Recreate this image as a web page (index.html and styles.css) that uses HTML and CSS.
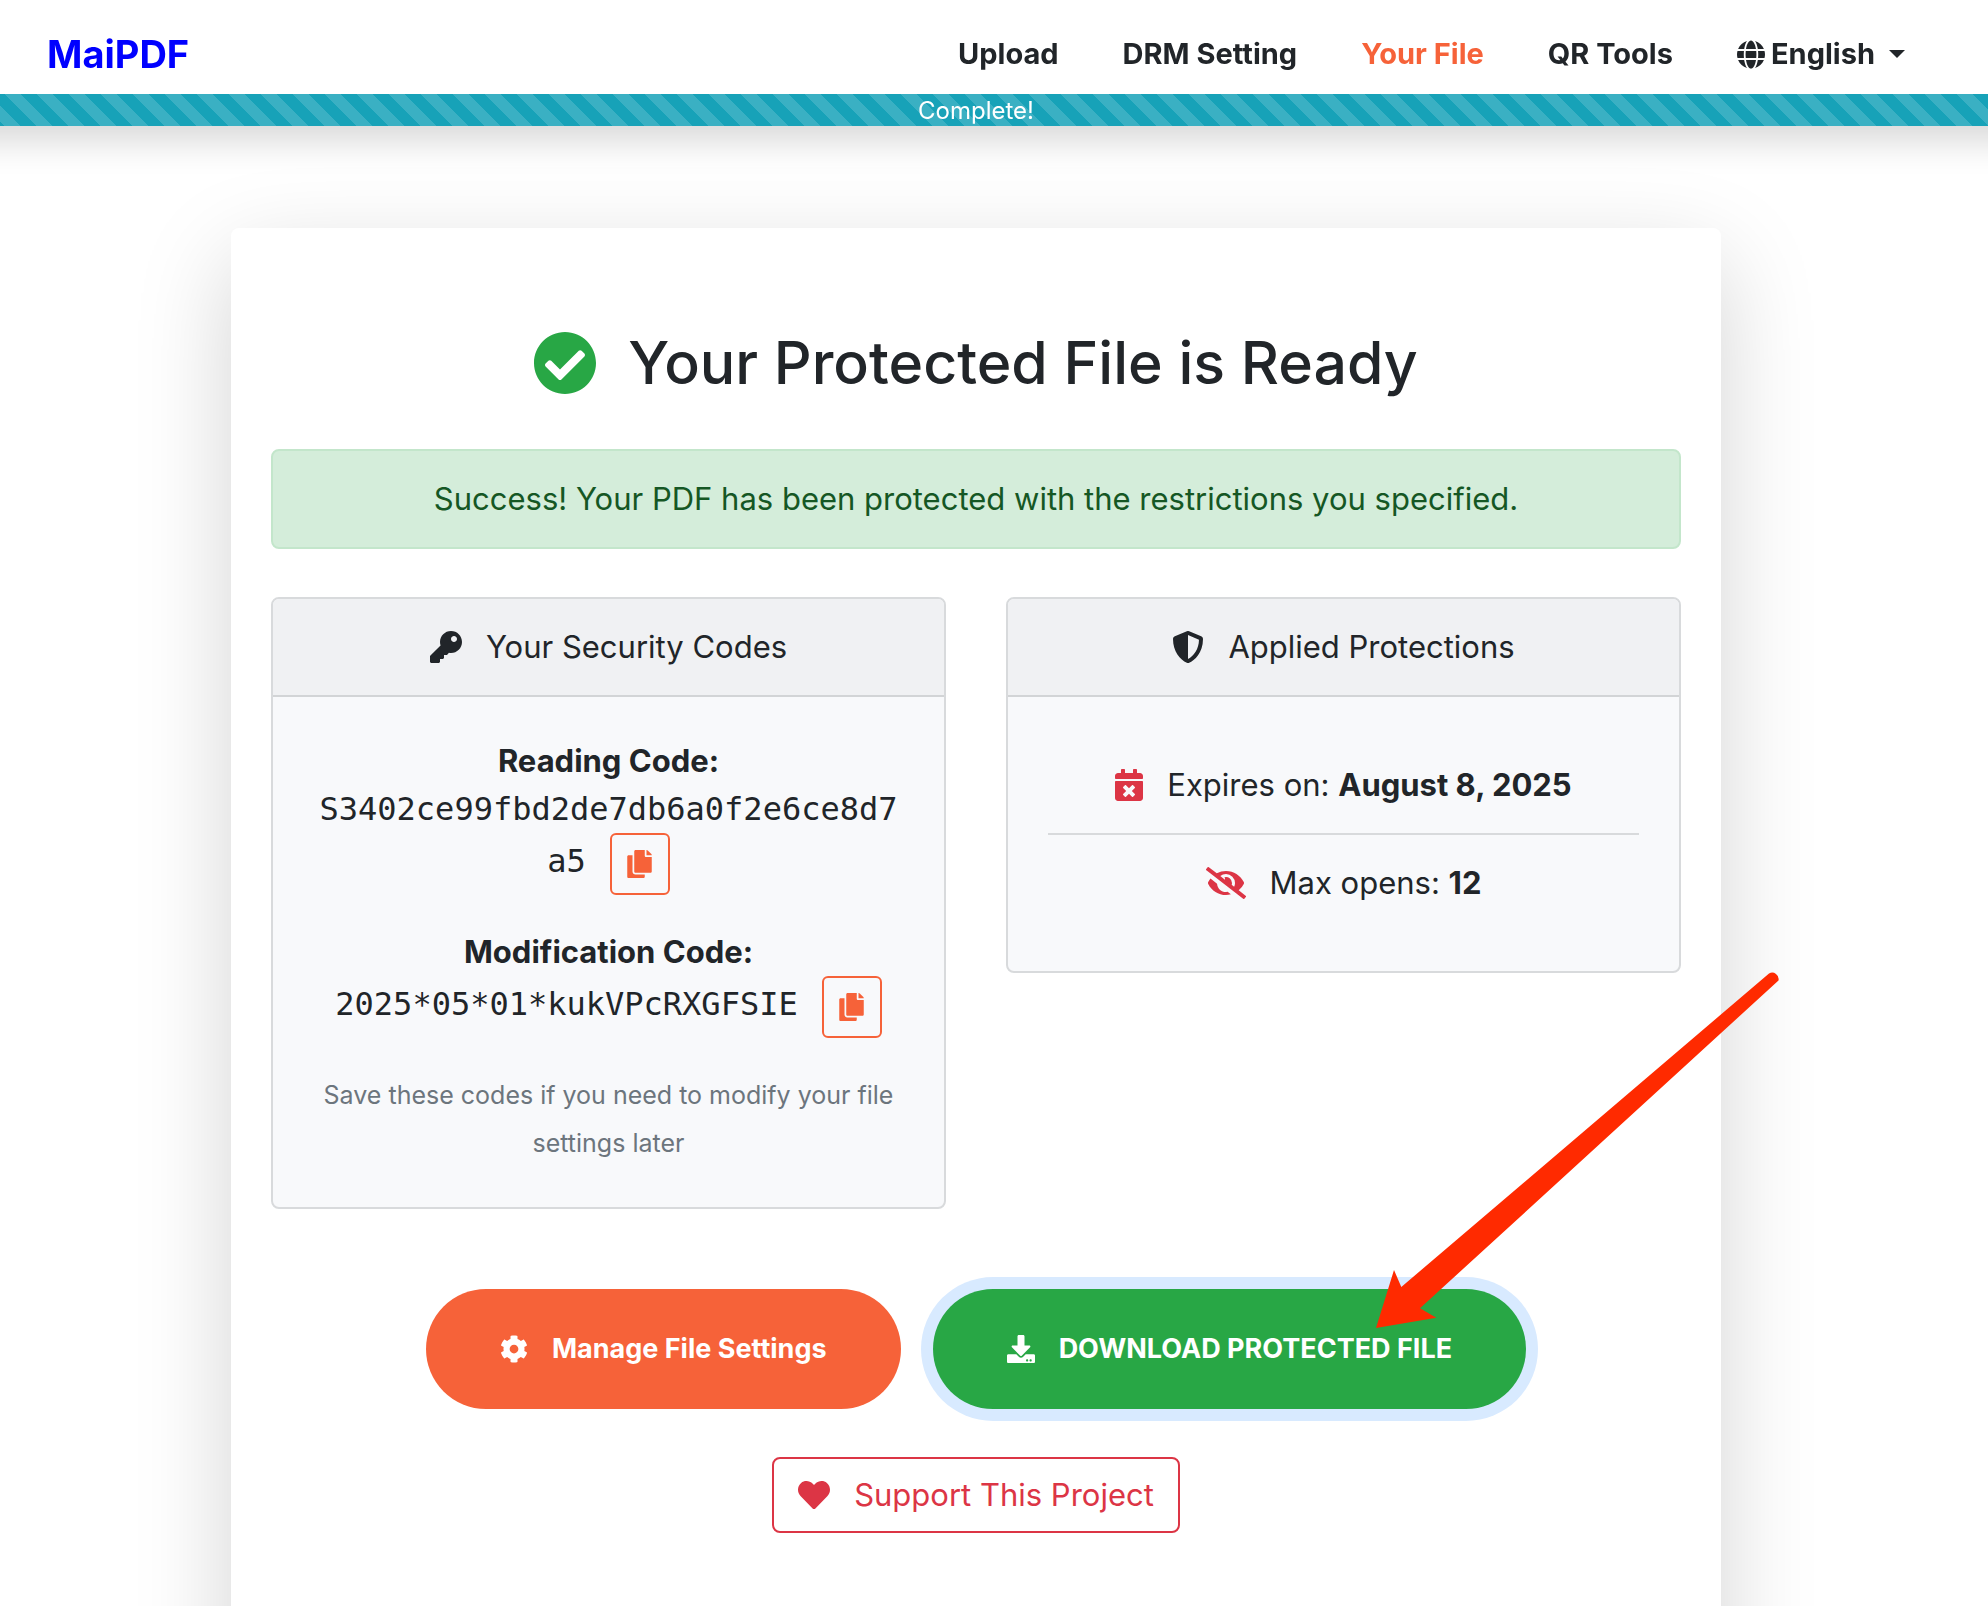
FILE: index.html
```html
<!DOCTYPE html>
<html lang="en">
<head>
<meta charset="utf-8">
<meta name="viewport" content="width=device-width, initial-scale=1">
<title>MaiPDF - Your File</title>
<link rel="stylesheet" href="styles.css">
</head>
<body>
<svg class="sprite" aria-hidden="true">
  <symbol id="copy" viewBox="0 0 448 512"><path d="M320 448v40c0 13.255-10.745 24-24 24H24c-13.255 0-24-10.745-24-24V120c0-13.255 10.745-24 24-24h72v296c0 30.879 25.121 56 56 56h168zm0-344V0H152c-13.255 0-24 10.745-24 24v368c0 13.255 10.745 24 24 24h272c13.255 0 24-10.745 24-24V128H344c-13.2 0-24-10.8-24-24zm120.971-31.029L375.029 7.029A24 24 0 0 0 358.059 0H352v96h96v-6.059a24 24 0 0 0-7.029-16.97z"/></symbol>
</svg>
<header class="topbar">
  <nav class="nav">
    <a class="brand" href="#">MaiPDF</a>
    <div class="nav-links">
      <a class="nav-link" href="#">Upload</a>
      <a class="nav-link" href="#">DRM Setting</a>
      <a class="nav-link active" href="#" aria-current="page">Your File</a>
      <a class="nav-link" href="#">QR Tools</a>
      <button class="nav-link lang" type="button">
        <svg class="globe" viewBox="0 0 496 512" aria-hidden="true"><path d="M336.5 160C322 70.7 287.8 8 248 8s-74 62.7-88.5 152h177zM152 256c0 22.2 1.2 43.5 3.3 64h185.3c2.1-20.5 3.3-41.8 3.3-64s-1.2-43.5-3.3-64H155.3c-2.1 20.5-3.3 41.8-3.3 64zm324.7-96c-28.6-67.9-86.5-120.4-158-141.6 24.4 33.8 41.2 84.7 50 141.6h108zM177.2 18.4C105.8 39.6 47.8 92.1 19.3 160h108c8.7-56.9 25.5-107.8 49.9-141.6zM487.4 192H372.7c2.1 21 3.3 42.5 3.3 64s-1.2 43-3.3 64h114.6c5.5-20.5 8.6-41.8 8.6-64s-3.1-43.5-8.5-64zM120 256c0-21.5 1.2-43 3.3-64H8.6C3.2 212.5 0 233.8 0 256s3.2 43.5 8.6 64h114.6c-2-21-3.2-42.5-3.2-64zm39.5 96c14.5 89.3 48.7 152 88.5 152s74-62.7 88.5-152h-177zm159.3 141.6c71.4-21.2 129.4-73.7 158-141.6h-108c-8.8 56.9-25.6 107.8-50 141.6zM19.3 352c28.6 67.9 86.5 120.4 158 141.6-24.4-33.8-41.2-84.7-50-141.6h-108z"/></svg>
        English
        <span class="caret"></span>
      </button>
    </div>
  </nav>
  <div class="progress" role="progressbar" aria-valuenow="100" aria-valuemin="0" aria-valuemax="100">Complete!</div>
</header>
<main class="page">
  <section class="sheet">
    <h1 class="title">
      <svg class="title-icon" viewBox="8 8 496 496" aria-hidden="true"><path d="M504 256c0 136.967-111.033 248-248 248S8 392.967 8 256 119.033 8 256 8s248 111.033 248 248zM227.314 387.314l184-184c6.248-6.248 6.248-16.379 0-22.627l-22.627-22.627c-6.248-6.249-16.379-6.249-22.628 0L216 308.118l-70.059-70.059c-6.248-6.248-16.379-6.248-22.628 0l-22.627 22.627c-6.248 6.248-6.248 16.379 0 22.627l104 104c6.249 6.249 16.379 6.249 22.628.001z"/></svg>
      Your Protected File is Ready
    </h1>
    <div class="alert" role="status">Success! Your PDF has been protected with the restrictions you specified.</div>

    <div class="columns">
      <article class="card">
        <h2 class="card-header">
          <svg class="icon" viewBox="0 0 512 512" aria-hidden="true"><path d="M512 176.001C512 273.203 433.202 352 336 352c-11.22 0-22.19-1.062-32.827-3.069l-24.012 27.014A23.999 23.999 0 0 1 261.223 384H224v40c0 13.255-10.745 24-24 24h-40v40c0 13.255-10.745 24-24 24H24c-13.255 0-24-10.745-24-24v-78.059c0-6.365 2.529-12.47 7.029-16.971l161.802-161.802C163.108 213.814 160 195.271 160 176 160 78.798 238.797.001 335.999 0 433.488-.001 512 78.511 512 176.001zM336 128c0 26.51 21.49 48 48 48s48-21.49 48-48-21.49-48-48-48-48 21.49-48 48z"/></svg>
          Your Security Codes
        </h2>
        <div class="card-body">
          <div class="code-block">
            <strong>Reading Code:</strong>
            <div class="code-line"><code>S3402ce99fbd2de7db6a0f2e6ce8d7a5</code><button class="copy" type="button" aria-label="Copy reading code"><svg class="copy-icon" aria-hidden="true"><use href="#copy"/></svg></button></div>
          </div>
          <div class="code-block">
            <strong>Modification Code:</strong>
            <div class="code-line"><code>2025*05*01*kukVPcRXGFSIE</code><button class="copy" type="button" aria-label="Copy modification code"><svg class="copy-icon" aria-hidden="true"><use href="#copy"/></svg></button></div>
          </div>
          <p class="note">Save these codes if you need to modify your file settings later</p>
        </div>
      </article>

      <article class="card">
        <h2 class="card-header">
          <svg class="icon" viewBox="0 0 512 512" aria-hidden="true"><path d="M466.5 83.7l-192-80a48.15 48.15 0 0 0-36.9 0l-192 80C27.7 91.1 16 108.6 16 128c0 198.5 114.5 335.7 221.5 380.3 11.8 4.9 25.1 4.9 36.9 0C360.1 472.6 496 349.3 496 128c0-19.4-11.7-36.9-29.5-44.3zM256.1 446.3l-.1-381 175.9 73.3c-3.3 151.4-82.1 261.1-175.8 307.7z"/></svg>
          Applied Protections
        </h2>
        <ul class="card-body rules">
          <li class="rule">
            <svg class="icon narrow danger" viewBox="0 0 448 512" aria-hidden="true"><path d="M436 160H12c-6.6 0-12-5.4-12-12v-36c0-26.500 21.500-48 48-48h48V12c0-6.600 5.400-12 12-12h40c6.600 0 12 5.400 12 12v52h128V12c0-6.600 5.400-12 12-12h40c6.600 0 12 5.400 12 12v52h48c26.500 0 48 21.500 48 48v36c0 6.600-5.400 12-12 12zM12 192h424c6.600 0 12 5.400 12 12v260c0 26.500-21.500 48-48 48H48c-26.500 0-48-21.500-48-48V204c0-6.600 5.400-12 12-12zm257.300 160l48.100-48.100c4.700-4.700 4.700-12.300 0-17l-28.300-28.300c-4.700-4.700-12.300-4.700-17 0L224 306.700l-48.100-48.100c-4.700-4.700-12.300-4.700-17 0l-28.300 28.300c-4.700 4.700-4.700 12.300 0 17l48.100 48.100-48.100 48.100c-4.700 4.700-4.700 12.300 0 17l28.300 28.300c4.700 4.700 12.300 4.700 17 0l48.100-48.100 48.100 48.100c4.700 4.700 12.300 4.700 17 0l28.300-28.300c4.700-4.700 4.700-12.300 0-17L269.300 352z"/></svg>
            <span>Expires on: <strong>August 8, 2025</strong></span>
          </li>
          <li class="rule">
            <svg class="icon wide danger" viewBox="0 0 640 512" aria-hidden="true"><path d="M320 400c-75.850 0-137.250-58.710-142.900-133.110L72.200 185.820c-13.790 17.300-26.480 35.590-36.720 55.590a32.350 32.350 0 0 0 0 29.190C89.710 376.410 197.070 448 320 448c26.910 0 52.870-4 77.890-10.460L346 397.390a144.130 144.130 0 0 1-26 2.610zm313.820 58.100l-110.550-85.440a331.250 331.250 0 0 0 81.250-102.070 32.350 32.350 0 0 0 0-29.190C550.290 135.590 442.930 64 320 64a308.150 308.150 0 0 0-147.320 37.700L45.460 3.370A16 16 0 0 0 23 6.180L3.370 31.450A16 16 0 0 0 6.180 53.900l588.360 454.730a16 16 0 0 0 22.460-2.810l19.640-25.270a16 16 0 0 0-2.820-22.450zm-183.720-142l-39.300-30.380A94.750 94.750 0 0 0 416 256a94.760 94.760 0 0 0-121.310-92.210A47.650 47.650 0 0 1 304 192a46.640 46.640 0 0 1-1.540 10l-73.610-56.890A142.310 142.310 0 0 1 320 112a143.920 143.920 0 0 1 144 144c0 21.630-5.290 41.790-13.900 60.110z"/></svg>
            <span>Max opens: <strong>12</strong></span>
          </li>
        </ul>
      </article>
    </div>

    <div class="actions">
      <button class="pill manage" type="button">
        <svg class="pill-icon" viewBox="0 0 512 512" aria-hidden="true"><path d="M487.4 315.7l-42.6-24.6c4.3-23.2 4.3-47 0-70.2l42.6-24.6c4.9-2.8 7.1-8.6 5.5-14-11.1-35.6-30-67.8-54.7-94.6-3.8-4.1-10-5.1-14.8-2.3L380.8 110c-17.9-15.4-38.5-27.3-60.8-35.1V25.8c0-5.6-3.9-10.5-9.4-11.7-36.7-8.2-74.3-7.8-109.2 0-5.5 1.2-9.4 6.1-9.4 11.7V75c-22.2 7.9-42.8 19.8-60.8 35.1L88.7 85.5c-4.9-2.8-11-1.9-14.8 2.3-24.7 26.7-43.6 58.9-54.7 94.6-1.7 5.4.6 11.2 5.5 14L67.3 221c-4.3 23.2-4.3 47 0 70.2l-42.6 24.6c-4.9 2.8-7.1 8.6-5.5 14 11.1 35.6 30 67.8 54.7 94.6 3.8 4.1 10 5.1 14.8 2.3l42.6-24.6c17.9 15.4 38.5 27.3 60.8 35.1v49.2c0 5.6 3.9 10.5 9.4 11.7 36.7 8.2 74.3 7.8 109.2 0 5.5-1.2 9.4-6.1 9.4-11.7v-49.2c22.2-7.9 42.8-19.8 60.8-35.1l42.6 24.6c4.9 2.8 11 1.9 14.8-2.3 24.7-26.7 43.6-58.9 54.7-94.6 1.5-5.5-.7-11.3-5.6-14.1zM256 336c-44.1 0-80-35.9-80-80s35.9-80 80-80 80 35.9 80 80-35.9 80-80 80z"/></svg>
        Manage File Settings
      </button>
      <div class="download-wrap">
        <button class="pill download" type="button">
          <svg class="pill-icon" viewBox="0 0 512 512" aria-hidden="true"><path d="M216 0h80c13.3 0 24 10.7 24 24v168h87.7c17.8 0 26.7 21.5 14.1 34.1L269.7 378.3c-7.5 7.5-19.8 7.5-27.3 0L90.1 226.1c-12.6-12.6-3.700-34.100 14.100-34.100H192V24c0-13.300 10.700-24 24-24zm296 376v112c0 13.300-10.700 24-24 24H24c-13.300 0-24-10.700-24-24V376c0-13.300 10.700-24 24-24h146.700l49 49c20.100 20.100 52.500 20.100 72.600 0l49-49H488c13.300 0 24 10.700 24 24zm-124 88c0-11-9-20-20-20s-20 9-20 20 9 20 20 20 20-9 20-20zm64 0c0-11-9-20-20-20s-20 9-20 20 9 20 20 20 20-9 20-20z"/></svg>
          DOWNLOAD PROTECTED FILE
        </button>
        <svg class="pointer" viewBox="0 0 460 400" aria-hidden="true"><path d="M36 377L54 319L61.300 336L429 22.500A6.500 6.500 0 0 1 438.500 29.500L80 357.300L96.300 366.700Z"/></svg>
      </div>
    </div>
    <div class="support-row">
      <button class="support" type="button">
        <svg class="icon" viewBox="0 0 512 512" aria-hidden="true"><path d="M462.3 62.6C407.5 15.9 326 24.3 275.7 76.2L256 96.5l-19.7-20.3C186.1 24.3 104.5 15.9 49.7 62.6c-62.8 53.6-66.1 149.8-9.9 207.9l193.5 199.8c12.5 12.9 32.8 12.9 45.3 0l193.5-199.8c56.3-58.1 53-154.3-9.8-207.9z"/></svg>
        Support This Project
      </button>
    </div>
  </section>
</main>
</body>
</html>
```
FILE: styles.css
```css
* {
  box-sizing: border-box;
}

body {
  margin: 0;
  height: 100vh;
  overflow: hidden auto;
  scrollbar-width: none;
  background: #fff;
  color: #212529;
  font: 400 31px/48px Inter, "Liberation Sans", sans-serif;
}

button {
  font: inherit;
  color: inherit;
  background: none;
  border: 0;
  padding: 0;
  cursor: pointer;
}

svg {
  flex: none;
  fill: currentColor;
}

strong {
  font-weight: 700;
}

.sprite {
  display: none;
}

/* Reaches past both window edges so its shadow stays even across the page */
.topbar {
  position: sticky;
  top: 0;
  z-index: 1;
  margin: 0 -48px;
  padding: 0 48px;
  background: #fff;
  box-shadow: 0 16px 32px rgba(0, 0, 0, 0.15);
}

.nav {
  display: flex;
  align-items: center;
  justify-content: space-between;
  padding: 30px 83px 16px 47px;
}

.brand {
  font-size: 38px;
  font-weight: 700;
  color: #00f;
  text-decoration: none;
}

.nav-links {
  display: flex;
  align-items: center;
  gap: 64px;
}

.nav-link {
  font-size: 29px;
  font-weight: 700;
  color: #212529;
  text-decoration: none;
}

.nav-link.active {
  color: #f66239;
}

.lang {
  display: flex;
  align-items: center;
  gap: 6px;
}

.globe {
  width: 28px;
  height: 29px;
}

.caret {
  margin-left: 8px;
  border: 8px solid transparent;
  border-top-color: currentColor;
  border-bottom: 0;
}

.progress {
  height: 32px;
  padding-right: 36px;
  background: #17a2b8 linear-gradient(45deg, rgba(255, 255, 255, 0.15) 25%, transparent 25%, transparent 50%, rgba(255, 255, 255, 0.15) 50%, rgba(255, 255, 255, 0.15) 75%, transparent 75%) 4px 0 / 32px 32px;
  color: #fff;
  font-size: 24px;
  line-height: 33px;
  text-align: center;
}

.page {
  padding: 102px 267px 0 231px;
  overflow: hidden;
}

.sheet {
  padding: 96px 40px 192px;
  border-radius: 8px;
  background: #fff;
  box-shadow: 0 32px 96px rgba(0, 0, 0, 0.175);
}

.title {
  display: flex;
  align-items: center;
  justify-content: center;
  gap: 32px;
  margin: 0 0 48px;
  font-size: 59px;
  font-weight: 500;
  line-height: 77px;
}

.title-icon {
  width: 62px;
  height: 62px;
  fill: #28a745;
}

.alert {
  padding: 24px;
  border: 2px solid #c3e6cb;
  border-radius: 8px;
  background: #d4edda;
  color: #155724;
  text-align: center;
}

.columns {
  display: grid;
  grid-template-columns: 1fr 1fr;
  align-items: start;
  gap: 60px;
  margin: 48px 0 80px;
}

.card {
  border: 2px solid #d8dadc;
  border-radius: 8px;
  background: #f8f9fb;
  text-align: center;
  overflow: hidden;
}

.card-header {
  display: flex;
  align-items: center;
  justify-content: center;
  gap: 24px;
  margin: 0;
  padding: 24px;
  border-bottom: 2px solid #d2d4d6;
  background: #f0f1f3;
  font-size: 31px;
  font-weight: 400;
}

.icon {
  width: 32px;
  height: 32px;
}

.narrow {
  width: 28px;
}

.wide {
  width: 40px;
}

.danger {
  color: #dc3545;
}

.card-body {
  margin: 0;
  padding: 40px;
}

.code-block {
  margin-bottom: 33px;
}

.code-line {
  word-break: break-all;
}

code {
  font: 400 32px/48px "DejaVu Sans Mono", monospace;
}

.copy {
  display: inline-flex;
  align-items: center;
  justify-content: center;
  width: 60px;
  height: 62px;
  margin-left: 24px;
  border: 2px solid #f66239;
  border-radius: 6px;
  color: #f66239;
  vertical-align: middle;
}

.copy-icon {
  width: 25px;
  height: 28px;
}

.note {
  margin: 0;
  color: #6c757d;
  font-size: 25px;
}

.rules {
  list-style: none;
}

.rule {
  display: flex;
  align-items: center;
  justify-content: center;
  gap: 24px;
  padding: 24px 0;
}

.rule + .rule {
  border-top: 2px solid #d8dadc;
}

.actions {
  display: flex;
  justify-content: center;
  gap: 32px;
}

.download-wrap {
  position: relative;
}

.pill {
  display: flex;
  align-items: center;
  gap: 24px;
  height: 120px;
  padding: 0 74px;
  border-radius: 60px;
  color: #fff;
  font-size: 27px;
  font-weight: 700;
}

.manage {
  background: #f66239;
}

.download {
  background: #28a745;
  box-shadow: 0 0 0 12px #d8eaff;
}

.pill-icon {
  width: 28px;
  height: 28px;
}

/* Red arrow that points at the download button */
.pointer {
  position: absolute;
  right: -274px;
  bottom: 58px;
  width: 460px;
  height: 400px;
  fill: #ff2a00;
  pointer-events: none;
}

.support-row {
  display: flex;
  justify-content: center;
  margin-top: 48px;
}

.support {
  display: flex;
  align-items: center;
  gap: 24px;
  padding: 12px 24px;
  border: 2px solid #dc3545;
  border-radius: 8px;
  color: #dc3545;
}
```
